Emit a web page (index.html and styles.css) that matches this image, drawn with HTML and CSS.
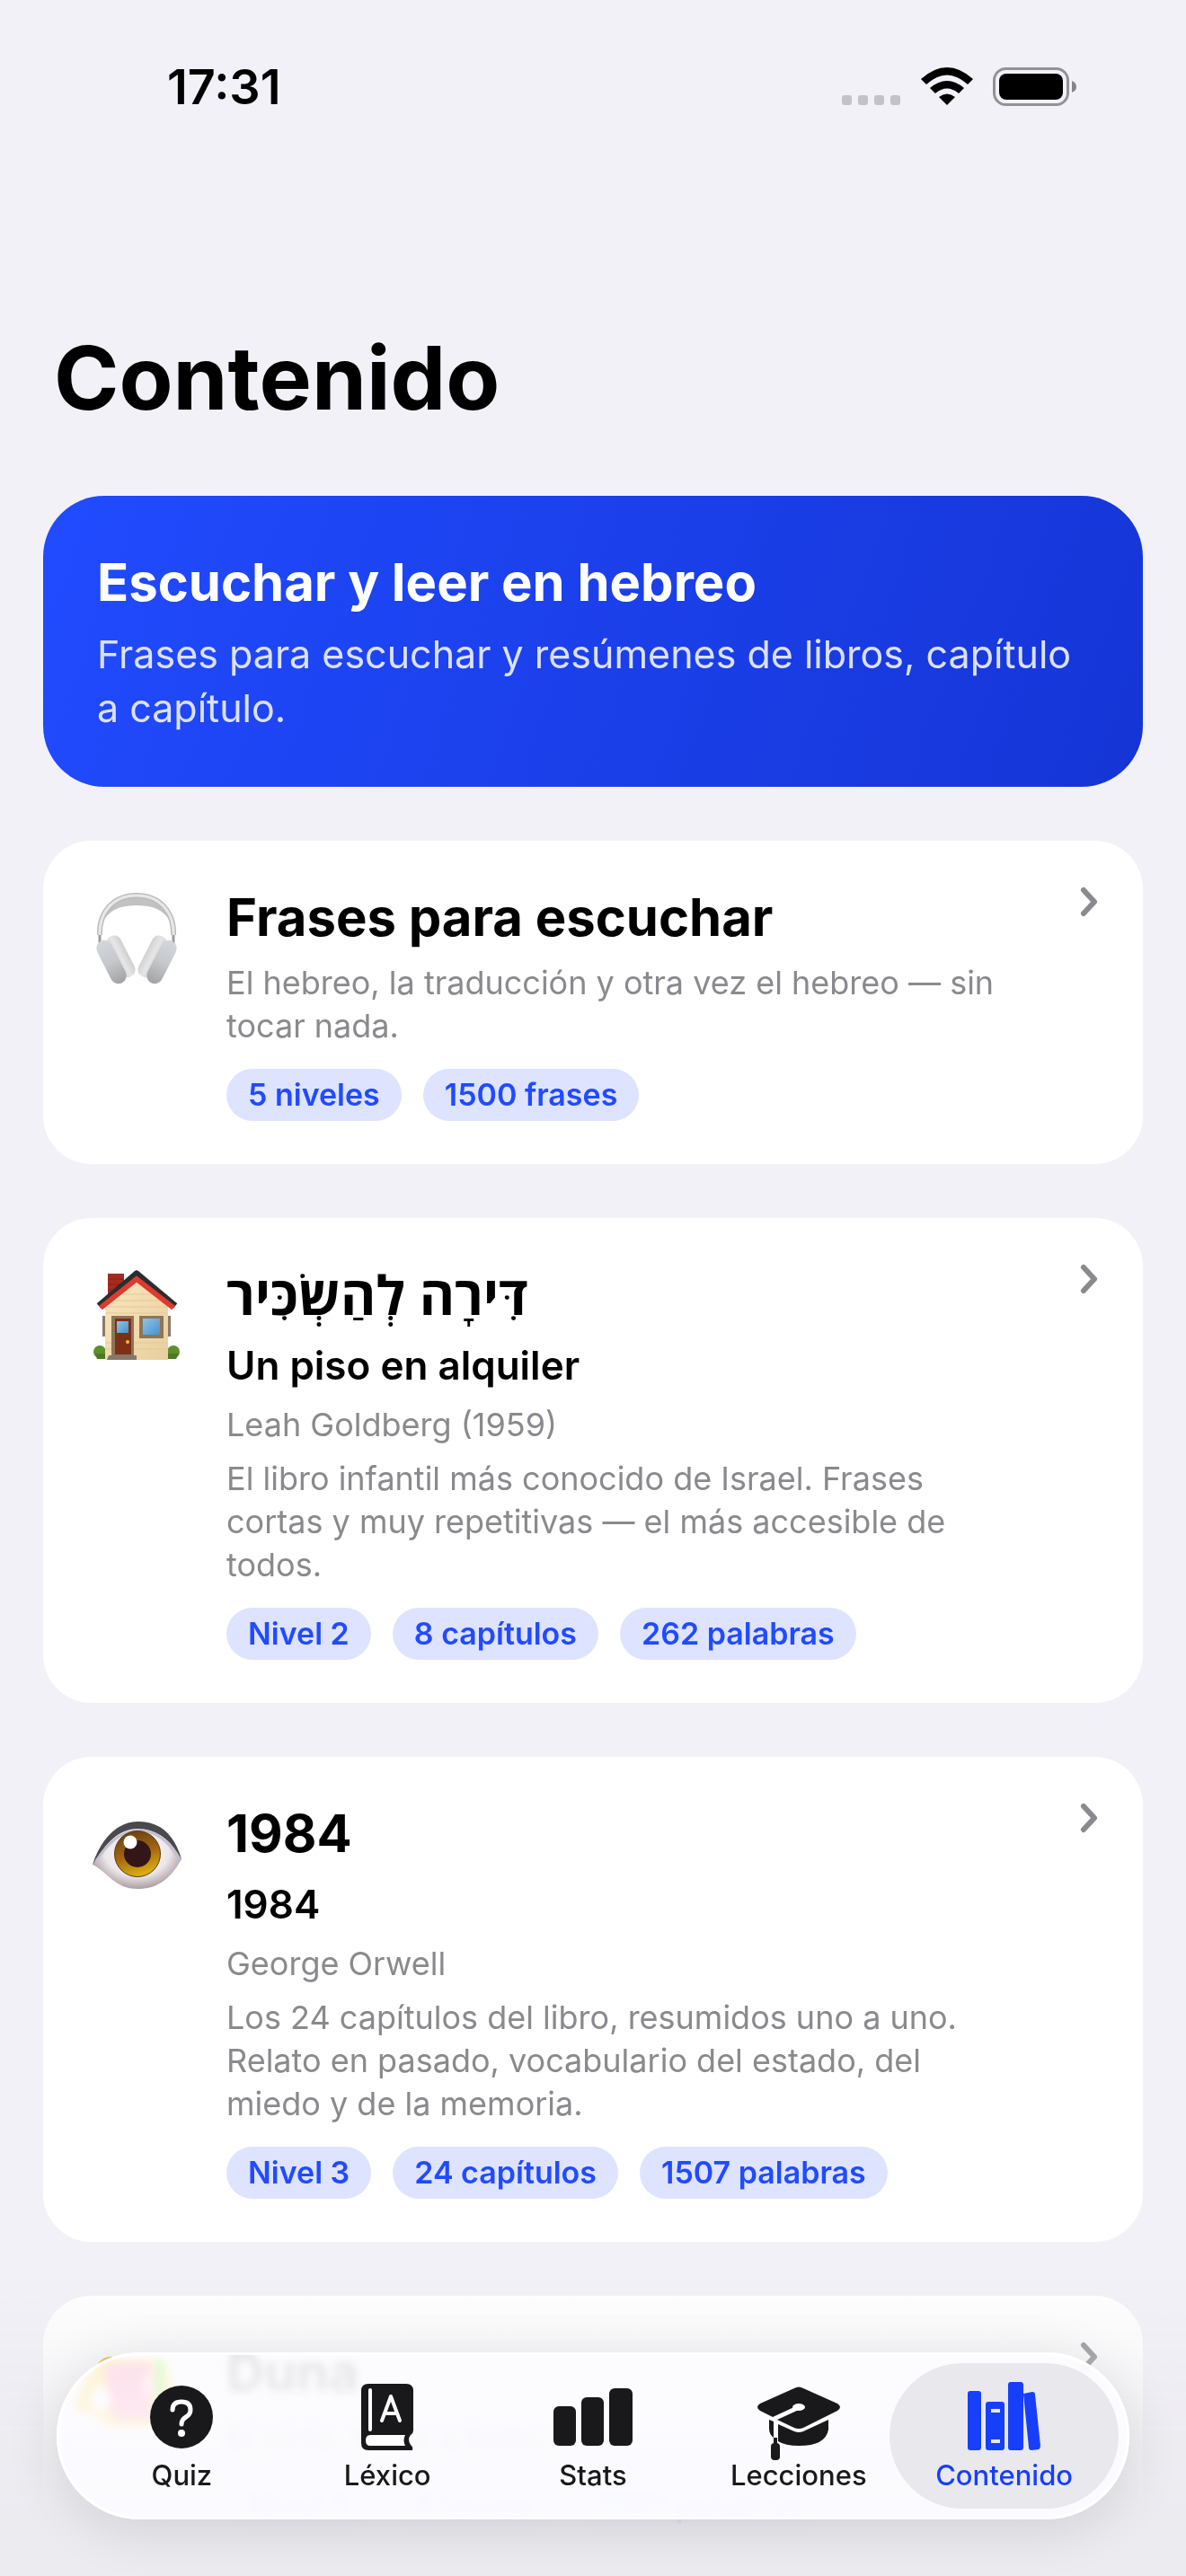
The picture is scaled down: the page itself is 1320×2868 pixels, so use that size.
FILE: index.html
```html
<!DOCTYPE html>
<html lang="es">
<head>
    <meta charset="UTF-8">
    <meta name="viewport" content="width=device-width, initial-scale=1">
    <title>Contenido</title>
    <link rel="stylesheet" href="styles.css">
</head>
<body>
    <div class="status-bar">
        <span class="clock">17:31</span>
        <div class="status-icons">
            <svg width="66" height="43" viewBox="0 0 66 43" fill="#c3c2c8">
                <rect x="0" y="31" width="11" height="11" rx="3"/>
                <rect x="18" y="31" width="11" height="11" rx="3"/>
                <rect x="36" y="31" width="11" height="11" rx="3"/>
                <rect x="54" y="31" width="11" height="11" rx="3"/>
            </svg>
            <svg width="58" height="43" viewBox="0 0 58 43">
                <path d="M0 13Q29 -13 58 13L52 19Q29 -2 6 19Z"/>
                <path d="M10 23Q29 7 48 23L42 29Q29 18 16 29Z"/>
                <path d="M20 33Q29 26 38 33L29 42Z"/>
            </svg>
            <svg width="94" height="43" viewBox="0 0 94 43">
                <rect x="1.5" y="1.5" width="82" height="40" rx="13" fill="none" stroke="#929195" stroke-width="3"/>
                <rect x="7" y="7" width="71" height="29" rx="8"/>
                <path d="M88 15Q93 17 93 21.500Q93 26 88 28Z" fill="#86858a"/>
            </svg>
        </div>
    </div>

    <main class="content">
        <h1>Contenido</h1>

        <section class="banner">
            <h2>Escuchar y leer en hebreo</h2>
            <p>Frases para escuchar y resúmenes de libros, capítulo a capítulo.</p>
        </section>

        <a class="card" href="#frases">
            <svg class="card-icon" viewBox="0 0 112 112">
                <defs>
                    <linearGradient id="cup" x1="0" y1="0" x2="0" y2="1">
                        <stop offset="0" stop-color="#d3d7dc"/>
                        <stop offset=".5" stop-color="#c6c8cb"/>
                        <stop offset="1" stop-color="#a2a2a4"/>
                    </linearGradient>
                    <linearGradient id="pad" x1="0" y1="0" x2="1" y2="0">
                        <stop offset="0" stop-color="#d2d2d2"/>
                        <stop offset=".5" stop-color="#e6e6e6"/>
                        <stop offset="1" stop-color="#cfcfcf"/>
                    </linearGradient>
                </defs>
                <path d="M19 41C24 20 40 14 56 14S88 20 93 41C86 30 76 24 56 24S26 30 19 41Z" fill="#c2c2c2"/>
                <path d="M15 57C14 32 30 13 56 13S98 32 97 57" fill="none" stroke="#bcbcbc" stroke-width="6"/>
                <path d="M15 57C14 32 30 13 56 13S98 32 97 57" fill="none" stroke="#e8e8e8" stroke-width="3"/>
                <path d="M15 57V67M97 57V67" stroke="#9a9a9a" stroke-width="3"/>
                <rect x="-8" y="-25" width="17" height="50" rx="8" transform="translate(38 81) rotate(-27)" fill="url(#pad)"/>
                <rect x="-9" y="-26" width="18" height="52" rx="9" transform="translate(28 87) rotate(-27)" fill="url(#cup)"/>
                <rect x="-9" y="-25" width="17" height="50" rx="8" transform="translate(74 81) rotate(27)" fill="url(#pad)"/>
                <rect x="-9" y="-26" width="18" height="52" rx="9" transform="translate(84 87) rotate(27)" fill="url(#cup)"/>
            </svg>
            <div class="card-body">
                <h2>Frases para escuchar</h2>
                <p>El hebreo, la traducción y otra vez el hebreo — sin tocar nada.</p>
                <div class="tags">
                    <span class="tag">5 niveles</span>
                    <span class="tag">1500 frases</span>
                </div>
            </div>
            <svg class="chevron" viewBox="0 0 24 40"><path d="M6 7L18 20L6 33"/></svg>
        </a>

        <a class="card" href="#piso">
            <svg class="card-icon" viewBox="0 0 112 112">
                <defs>
                    <linearGradient id="wall" x1="0" y1="0" x2="1" y2="1">
                        <stop offset="0" stop-color="#fbe6bd"/>
                        <stop offset="1" stop-color="#e8cf9f"/>
                    </linearGradient>
                    <linearGradient id="glass" x1="0" y1="0" x2="1" y2="1">
                        <stop offset="0" stop-color="#8cc5ea"/>
                        <stop offset="1" stop-color="#4c8fc9"/>
                    </linearGradient>
                </defs>
                <circle cx="15" cy="101" r="7" fill="#5d8f2d"/>
                <circle cx="97" cy="101" r="7" fill="#5d8f2d"/>
                <path d="M10 103H21V109H12ZM91 103H103L100 109H91Z" fill="#4c7a24"/>
                <rect x="24" y="14" width="18" height="26" fill="#a52a20"/>
                <path d="M24 20H42M24 26H42M24 32H42" stroke="#8a1f18"/>
                <path d="M18 61H24V84H18ZM90 61H94V84H90Z" fill="#8d7a66"/>
                <path d="M21 48L56 20L91 48V110H21Z" fill="url(#wall)"/>
                <path d="M40 37H73M31 44H82M22 51H90M22 58H90M22 91H90M22 98H90" stroke="#dfc898"/>
                <path d="M14 50L56 14L99 50" fill="none" stroke="#2c2c2e" stroke-width="7" stroke-linejoin="round"/>
                <path d="M16 52L56 20L97 52" fill="none" stroke="#dc3b30" stroke-width="6"/>
                <rect x="28" y="61" width="25" height="45" fill="#8d7557"/>
                <rect x="32" y="64" width="18" height="40" fill="#7c3019"/>
                <rect x="34" y="67" width="13" height="13" fill="url(#glass)"/>
                <circle cx="46" cy="90" r="2" fill="#f7bd34"/>
                <rect x="59" y="61" width="27" height="25" fill="#8d7557"/>
                <rect x="63" y="64" width="19" height="18" fill="url(#glass)"/>
                <path d="M25 105H56V110H23Z" fill="#85776c"/>
            </svg>
            <div class="card-body">
                <h2 lang="he">דִּירָה לְהַשְׂכִּיר</h2>
                <h3>Un piso en alquiler</h3>
                <p>Leah Goldberg (1959)</p>
                <p>El libro infantil más conocido de Israel. Frases cortas y muy repetitivas — el más accesible de todos.</p>
                <div class="tags">
                    <span class="tag">Nivel 2</span>
                    <span class="tag">8 capítulos</span>
                    <span class="tag">262 palabras</span>
                </div>
            </div>
            <svg class="chevron" viewBox="0 0 24 40"><path d="M6 7L18 20L6 33"/></svg>
        </a>

        <a class="card" href="#1984">
            <svg class="card-icon" viewBox="0 0 112 112">
                <defs>
                    <radialGradient id="eyeball" cx=".5" cy=".45" r=".6">
                        <stop offset="0" stop-color="#fff"/>
                        <stop offset=".6" stop-color="#ece6ea"/>
                        <stop offset="1" stop-color="#9b8b90"/>
                    </radialGradient>
                    <linearGradient id="iris" x1="0.300" y1="0" x2=".6" y2="1">
                        <stop offset="0" stop-color="#674015"/>
                        <stop offset=".5" stop-color="#a3650f"/>
                        <stop offset="1" stop-color="#e2b510"/>
                    </linearGradient>
                </defs>
                <path d="M7 72C18 42 36 24 58 24S97 38 106 66C96 84 82 99 58 99C31 99 24 80 7 72Z" fill="url(#eyeball)"/>
                <path d="M7 72C16 44 34 24 58 24S98 38 106 66C94 44 78 32 57 32S22 48 7 72Z" fill="#4a494d"/>
                <path d="M11 68C24 48 38 35 57 34S93 46 103 66" fill="none" stroke="#c2bfce" stroke-width="3"/>
                <circle cx="57" cy="60" r="25.500" fill="url(#iris)" stroke="#5b3a12" stroke-width="1"/>
                <circle cx="57" cy="60" r="15" fill="#321618"/>
                <circle cx="49" cy="47" r="7.500" fill="#fff"/>
            </svg>
            <div class="card-body">
                <h2>1984</h2>
                <h3>1984</h3>
                <p>George Orwell</p>
                <p>Los 24 capítulos del libro, resumidos uno a uno. Relato en pasado, vocabulario del estado, del miedo y de la memoria.</p>
                <div class="tags">
                    <span class="tag">Nivel 3</span>
                    <span class="tag">24 capítulos</span>
                    <span class="tag">1507 palabras</span>
                </div>
            </div>
            <svg class="chevron" viewBox="0 0 24 40"><path d="M6 7L18 20L6 33"/></svg>
        </a>

        <a class="card" href="#duna">
            <svg class="card-icon" viewBox="0 0 112 112">
                <path d="M-13 82Q-8 50 14 26Q24 16 34 22L88 24L104 94Q60 102 22 96Q14 84 -4 80Z" fill="#f3ae2e"/>
                <path d="M20 32Q40 24 74 28V88Q50 94 28 86Z" fill="#f2304a"/>
                <ellipse cx="16" cy="67" rx="11" ry="14" fill="#fff"/>
                <rect x="65" y="38" width="5" height="26" fill="#fff"/>
                <rect x="76" y="24" width="10" height="66" fill="#35b51e"/>
            </svg>
            <div class="card-body">
                <h2>Duna</h2>
                <p>El ciclo, tomo a tomo.</p>
                <div class="tags">
                    <span class="tag">Nivel 3</span>
                    <span class="tag">6 tomos</span>
                    <span class="tag">1507 palabras</span>
                </div>
            </div>
            <svg class="chevron" viewBox="0 0 24 40"><path d="M6 7L18 20L6 33"/></svg>
        </a>
    </main>

    <div class="bottom-fade"></div>
    <nav class="tab-bar">
        <a class="tab" href="#quiz">
            <svg viewBox="0 0 96 90">
                <circle cx="48" cy="41" r="35"/>
                <path d="M38 33Q38 24 48 24Q58 24 58 33Q58 38 53 41Q48 44 48 49" fill="none" stroke="#fff" stroke-width="5" stroke-linecap="round"/>
                <circle cx="48" cy="59" r="4" fill="#fff"/>
            </svg>
            <span>Quiz</span>
        </a>
        <a class="tab" href="#lexico">
            <svg viewBox="0 0 96 90">
                <path d="M27 4H69Q77 4 77 12V56Q77 59 74 61Q70 66 74 72Q77 74 76 78H27Q19 78 19 70V12Q19 4 27 4Z"/>
                <path d="M29 11V55M42 45L52 18L62 45M45 37H59" fill="none" stroke="#fff" stroke-width="4" stroke-linecap="round" stroke-linejoin="round"/>
                <path d="M29 61H68Q65 67 68 73H29Q24 73 24 67T29 61Z" fill="#fff"/>
            </svg>
            <span>Léxico</span>
        </a>
        <a class="tab" href="#stats">
            <svg viewBox="0 0 96 90">
                <rect x="4" y="29" width="25" height="44" rx="6"/>
                <rect x="35" y="19" width="25" height="54" rx="6"/>
                <rect x="66" y="9" width="26" height="64" rx="6"/>
            </svg>
            <span>Stats</span>
        </a>
        <a class="tab" href="#lecciones">
            <svg viewBox="0 0 96 90">
                <path d="M43 9Q48 6 53 9L91 26Q97 30 91 34L53 53Q48 55 43 53L24 44L48 33L45 29L19 41L5 34Q-1 30 5 26Z"/>
                <path d="M15 44L20 46V64Q15 60 15 54ZM25 49L43 57Q48 59 53 57L81 44V55Q78 73 48 73Q33 73 25 68Z"/>
                <rect x="17" y="70" width="10" height="19" rx="4"/>
                <rect x="20" y="64" width="4" height="8"/>
                <ellipse cx="48" cy="30" rx="7" ry="4" fill="#fff"/>
            </svg>
            <span>Lecciones</span>
        </a>
        <a class="tab active" href="#contenido">
            <svg viewBox="0 0 96 90">
                <rect x="7" y="12" width="15" height="66" rx="3"/>
                <path fill-rule="evenodd" d="M30 24H45Q48 24 48 27V75Q48 78 45 78H30Q27 78 27 75V27Q27 24 30 24ZM33 32V36H43V32ZM33 66V70H43V66Z"/>
                <rect x="52" y="2" width="17" height="76" rx="3"/>
                <path d="M69 15L79 13Q82 13 82 16L88 73Q88 76 86 77L78 78Q75 78 75 75Z"/>
            </svg>
            <span>Contenido</span>
        </a>
    </nav>
</body>
</html>
```
FILE: styles.css
```css
* {
    box-sizing: border-box;
    margin: 0;
    padding: 0;
}
body {
    font-family: Inter, "Liberation Sans", sans-serif;
    background: #f2f1f7;
    color: #000;
    height: 100vh;
    overflow: hidden;
}
a {
    color: inherit;
    text-decoration: none;
}
.status-bar {
    display: flex;
    justify-content: space-between;
    align-items: center;
    height: 192px;
    padding: 0 121px 0 186px;
}
.clock {
    font-size: 54px;
    font-weight: 600;
}
.status-icons {
    display: flex;
    gap: 22px;
}
.content {
    display: flex;
    flex-direction: column;
    gap: 60px;
    padding: 168px 48px 0;
}
h1 {
    font-size: 98px;
    line-height: 122px;
    font-weight: 700;
    padding: 0 12px 10px;
}
.banner {
    padding: 60px 60px 58px;
    border-radius: 68px;
    color: #fff;
    background: linear-gradient(110deg, #214bff, #1535d6);
}
.banner h2 {
    line-height: 72px;
    margin-bottom: 14px;
}
.banner p {
    font-size: 43px;
    line-height: 60px;
    color: #dbe1ff;
}
h2 {
    font-size: 58px;
    line-height: 74px;
    font-weight: 700;
}
h2[lang="he"] {
    font-family: "Open Sans", "Liberation Sans", "DejaVu Sans", sans-serif;
    font-size: 60px;
}
h3 {
    font-size: 44px;
    line-height: 60px;
    font-weight: 600;
}
.card {
    display: flex;
    align-items: flex-start;
    padding: 48px;
    border-radius: 54px;
    background: #fff;
}
.card-icon {
    flex: none;
    width: 112px;
    height: 112px;
    margin-right: 44px;
    overflow: visible;
}
.card-body {
    flex: 1;
    display: flex;
    flex-direction: column;
    gap: 12px;
    padding-right: 80px;
}
.card-body p {
    font-size: 36px;
    line-height: 48px;
    color: #8a8a8e;
}
.tags {
    display: flex;
    gap: 24px;
    margin-top: 12px;
}
.tag {
    padding: 0 24px;
    border-radius: 29px;
    background: #dee3ff;
    color: #214bff;
    font-size: 34px;
    line-height: 58px;
    font-weight: 600;
}
.chevron {
    flex: none;
    width: 24px;
    height: 40px;
    fill: none;
    stroke: #8a8a8e;
    stroke-width: 6;
    stroke-linecap: round;
    stroke-linejoin: round;
}
.bottom-fade {
    position: fixed;
    left: 0;
    right: 0;
    bottom: 0;
    height: 340px;
    background: linear-gradient(rgba(235, 234, 239, 0), rgba(235, 234, 239, 0.95) 80%);
}
.tab-bar {
    position: fixed;
    left: 63px;
    right: 63px;
    bottom: 63px;
    display: grid;
    grid-template-columns: repeat(5, 1fr);
    padding: 12px 25px;
    border-radius: 93px;
    background: rgba(253, 253, 255, 0.86);
    backdrop-filter: blur(5px) saturate(3);
    box-shadow: 0 10px 60px rgba(0, 0, 0, 0.12), inset 0 0 0 3px rgba(255, 255, 255, 0.9);
    color: #19191b;
}
.tab {
    display: flex;
    flex-direction: column;
    align-items: center;
    height: 162px;
    margin: 0 -13px;
    padding-top: 19px;
    border-radius: 81px;
    font-size: 31px;
    line-height: 32px;
    font-weight: 500;
}
.tab svg {
    width: 96px;
    height: 90px;
    fill: currentColor;
}
.tab.active {
    background: #e9e9ed;
    color: #173ffa;
}
```
